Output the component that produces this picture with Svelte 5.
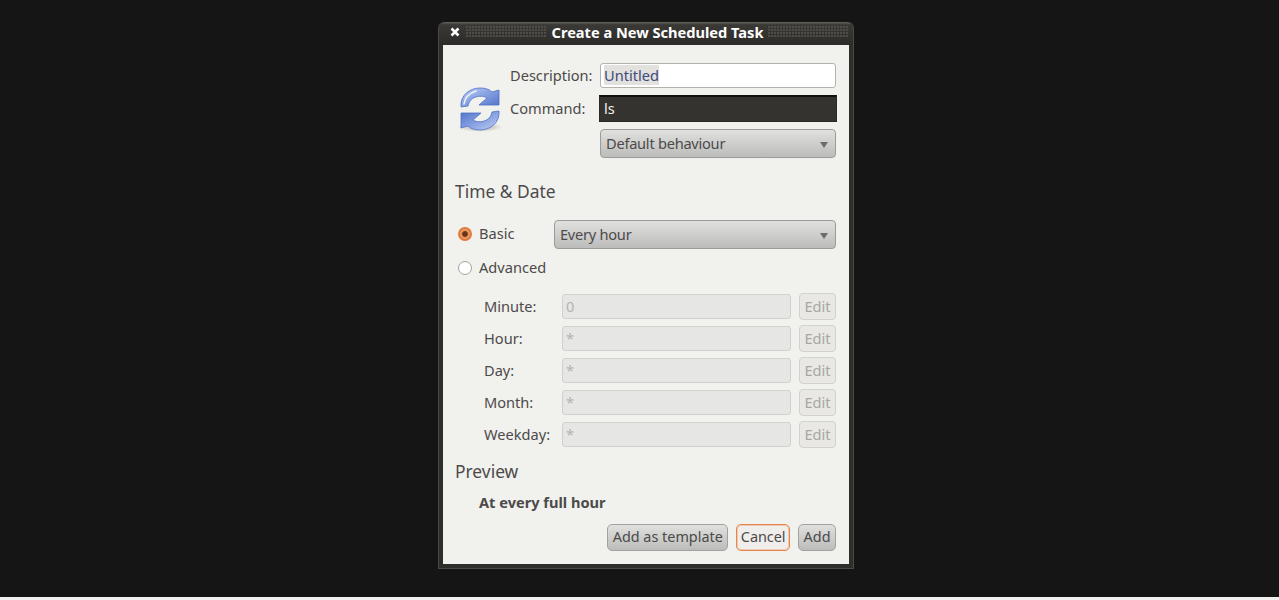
<script>
    const fields = [
        { label: 'Minute:', value: '0' },
        { label: 'Hour:', value: '*' },
        { label: 'Day:', value: '*' },
        { label: 'Month:', value: '*' },
        { label: 'Weekday:', value: '*' },
    ];
</script>

<div class="desktop">
    <div class="window">
        <div class="titlebar">
            <svg class="close" width="12" height="12" viewBox="0 0 12 12"><path d="M2.5 2.5l7 7M9.5 2.5l-7 7" stroke="#fff" stroke-width="2.6" /></svg>
            <span class="dots"></span>
            <span class="title">Create a New Scheduled Task</span>
            <span class="dots"></span>
        </div>
        <div class="content">
            <div class="top">
                <svg class="refresh" width="44" height="50" viewBox="458 84 44 50">
                    <defs>
                        <linearGradient id="band" x1="0" y1="0" x2="1" y2="1">
                            <stop offset="0" stop-color="#c3d0f0" />
                            <stop offset="0.45" stop-color="#8ba5e4" />
                            <stop offset="1" stop-color="#4f70c8" />
                        </linearGradient>
                        <radialGradient id="shade">
                            <stop offset="0" stop-color="#8a8a84" stop-opacity="0.7" />
                            <stop offset="1" stop-color="#8a8a84" stop-opacity="0" />
                        </radialGradient>
                    </defs>
                    <ellipse cx="480" cy="127" rx="23" ry="5" fill="url(#shade)" />
                    <g fill="url(#band)" stroke="#4f70c6" stroke-width="0.8" stroke-linejoin="round">
                        <path d="M461 107C460 95 470 88 480 88C485 88 489 89 492 92L499 90L499 105L479 105L487 98C483 95 470 95 468 106Z" />
                        <path d="M461 107C460 95 470 88 480 88C485 88 489 89 492 92L499 90L499 105L479 105L487 98C483 95 470 95 468 106Z" transform="rotate(180 480 109)" />
                    </g>
                    <path d="M464 104C465 97 470 93 476 91" fill="none" stroke="#eef2fb" stroke-width="1.6" stroke-linecap="round" />
                </svg>
                <div class="form">
                    <label for="desc">Description:</label>
                    <div class="entry"><span class="sel">Untitled</span></div>
                    <label for="cmd">Command:</label>
                    <div class="entry dark">ls</div>
                    <span></span>
                    <div class="combo">Default behaviour<i class="arrow"></i></div>
                </div>
            </div>

            <h2 class="time-head">Time &amp; Date</h2>

            <div class="basic">
                <span class="radio on"></span>
                <span class="rlabel">Basic</span>
                <div class="combo">Every hour<i class="arrow"></i></div>
            </div>
            <div class="advanced">
                <span class="radio"></span>
                <span class="rlabel">Advanced</span>
            </div>

            <div class="fields">
                {#each fields as f}
                    <span class="flabel">{f.label}</span>
                    <div class="off-entry">{f.value}</div>
                    <button class="off-btn">Edit</button>
                {/each}
            </div>

            <h2 class="preview-head">Preview</h2>
            <div class="preview">At every full hour</div>

            <div class="actions">
                <button class="btn">Add as template</button>
                <button class="btn focus">Cancel</button>
                <button class="btn">Add</button>
            </div>
        </div>
    </div>
</div>
<div class="strip"></div>

<style>
    :global(body) { margin: 0; background: #151515; font-family: "Noto Sans", "Open Sans", sans-serif; font-size: 14.6px; color: #4c4a4a; }
    .desktop { height: 597px; display: flex; padding: 22px 0 0 438px; box-sizing: border-box; }
    .strip { height: 3px; background: #f2f1f0; }
    .window { width: 416px; height: 547px; box-sizing: border-box; background: #2e2d2b; border-radius: 6px 6px 0 0; padding: 0 4px 4px; display: flex; flex-direction: column; border: 1px solid #4a4946; border-top: 0; }
    .titlebar { height: 23px; display: flex; align-items: center; gap: 5px; background: linear-gradient(#64635e, #3a3935 12%, #2c2b29); margin: 0 -4px; padding: 0 4px 3px 6px; border-radius: 6px 6px 0 0; flex: none; box-sizing: border-box; }
    .close { margin-left: 4px; flex: none; }
    .dots { flex: 1; height: 12px; background-image: radial-gradient(circle at 1px 1px, #4e4d4a 0.8px, transparent 1px); background-size: 3px 3px; }
    .title { color: #fff; font-weight: 700; font-size: 14.6px; white-space: nowrap; }
    .content { flex: 1; background: #f1f1ed; padding: 18px 13px 13px 12px; display: flex; flex-direction: column; }
    .top { display: flex; }
    .refresh { flex: none; margin: 21px 8px 0 3px; }
    .form { flex: 1; display: grid; grid-template-columns: 90px 1fr; grid-template-rows: 25px 27px 29px; row-gap: 7px; align-items: center; }
    .form label { padding-bottom: 2px; }
    .entry { height: 25px; box-sizing: border-box; background: #fff; border: 1px solid #b5b2ae; border-radius: 3px; padding: 0 3px; line-height: 23px; }
    .sel { background: #e2e1de; color: #3f4a78; }
    .entry.dark { height: 27px; background: #35332f; border: 1px solid #2a2926; border-top: 2px solid #111; border-radius: 0; color: #f0f0ec; margin: 0 -1px; padding: 0 4px; line-height: 23px; }
    .combo { height: 29px; box-sizing: border-box; position: relative; background: linear-gradient(#e0e0de, #bcbcba); border: 1px solid #9c9b98; border-radius: 4px; padding: 0 5px; line-height: 27px; letter-spacing: -0.25px; }
    .arrow { position: absolute; right: 7px; top: 12px; width: 0; height: 0; border: 4.5px solid transparent; border-top: 6px solid #6e6d6a; border-bottom: 0; }
    h2 { margin: 0; font-size: 17.4px; font-weight: 400; line-height: 24px; }
    .time-head { margin-top: 21px; }
    .basic { display: flex; align-items: center; margin-top: 17px; height: 29px; }
    .basic .rlabel { width: 75px; margin-top: -4px; }
    .basic .combo { flex: 1; }
    .radio { width: 14px; height: 14px; box-sizing: border-box; border-radius: 50%; background: #fff; border: 1px solid #a5a29d; margin: 0 7px 0 3px; flex: none; }
    .radio.on { border: 2px solid #e07a3c; background: radial-gradient(circle, #6b3318 2.4px, #e08a50 3.2px, #eda878 5px); margin-top: -2px; }
    .advanced { display: flex; align-items: center; height: 20px; margin-top: 9px; }
    .advanced .rlabel { margin-top: -2px; }
    .fields { display: grid; grid-template-columns: 70px 229px 37px; column-gap: 8px; row-gap: 5px; align-items: center; margin: 15px 0 0 29px; }
    .flabel { padding-bottom: 2px; }
    .off-entry { height: 25px; box-sizing: border-box; background: #e6e6e4; border: 1px solid #d2d1cd; border-radius: 3px; color: #b5b4b0; padding: 0 3px; line-height: 22px; }
    .off-btn { height: 27px; padding: 0 0 2px; font: inherit; background: #e9e8e5; border: 1px solid #d2d1cd; border-radius: 4px; color: #a8a7a3; }
    .preview-head { margin-top: 11px; }
    .preview { font-weight: 700; margin: 9px 0 0 24px; line-height: 20px; }
    .actions { display: flex; justify-content: flex-end; gap: 8px; margin-top: auto; }
    .btn { height: 27px; box-sizing: border-box; padding: 0 4.5px 2px; font: inherit; font-size: 14.4px; color: #4c4a4a; background: linear-gradient(#e0e0de, #bcbcba); border: 1px solid #a3a29f; border-radius: 5px; }
    .btn.focus { background: #efeeea; border: 1px solid #e9854b; box-shadow: inset 0 0 0 1px rgba(233, 133, 75, 0.35); padding: 0 3.5px 2px; }
</style>
